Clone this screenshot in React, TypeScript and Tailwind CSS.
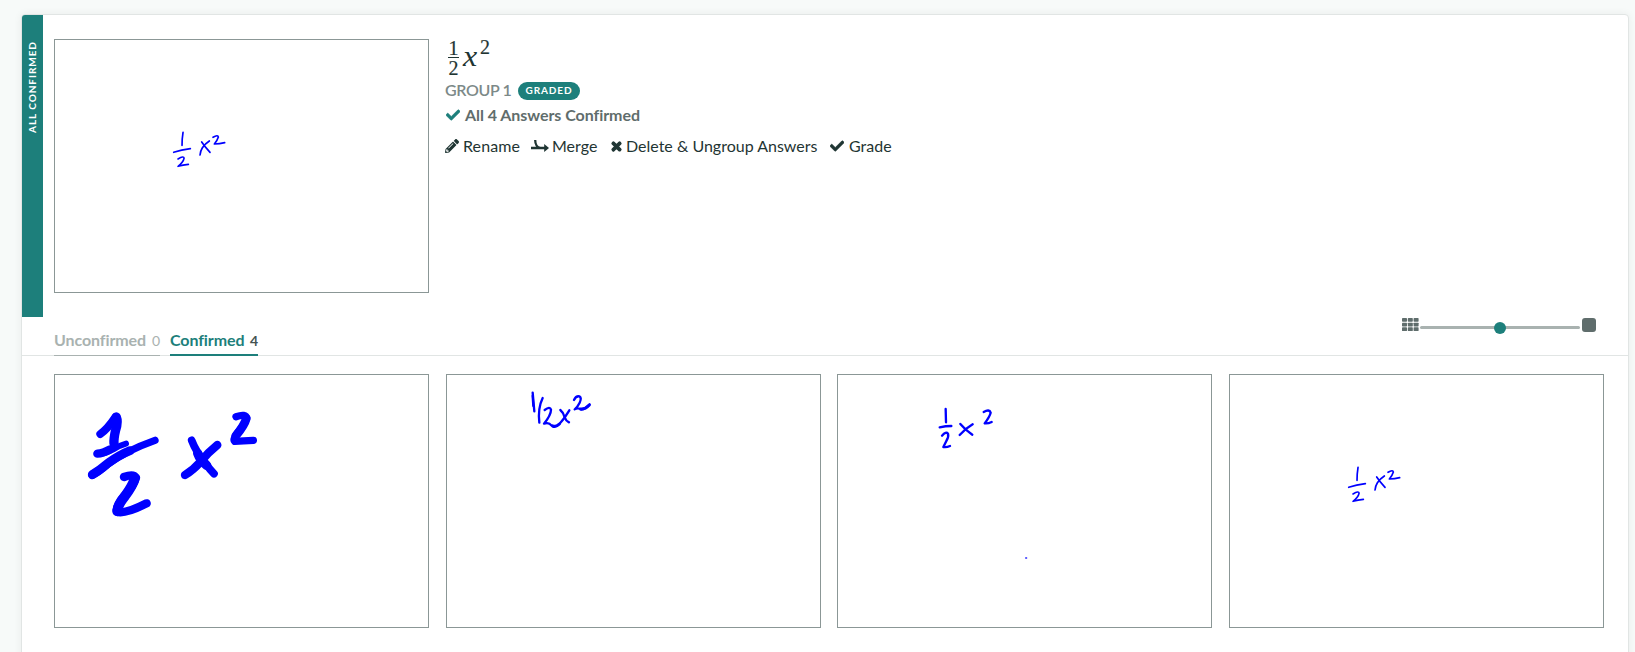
import React from "react";
import { FaCheck, FaPencilAlt, FaTimes } from "react-icons/fa";

function Sketch({ children }: { children?: React.ReactNode }) {
  return (
    <div className="h-[254px] w-[375px] shrink-0 border border-[#8b9796] bg-white">
      <svg viewBox="0 0 373 252" className="block size-full" fill="none" stroke="#0000ff" strokeLinecap="round" strokeLinejoin="round">
        {children}
      </svg>
    </div>
  );
}

function SmallHalf() {
  return (
    <g transform="translate(-55.3 -40) scale(0.33333)" strokeWidth="5">
      <path d="M550 397Q547 415 547 436" />
      <path d="M522 457Q545 449 572 446" />
      <path d="M535 477Q553 466 553 475Q551 486 535 499Q550 494 566 493" />
      <path d="M606 426Q615 440 631 457M629 423Q603 440 601 465" />
      <path d="M640 412Q655 403 656 411Q653 421 644 432Q660 432 675 428" />
    </g>
  );
}

function BoldHalf() {
  return (
    <g transform="translate(15 15) scale(0.33333)" strokeWidth="24">
      <path d="M91 132Q112 118 136 82" />
      <path d="M139 81Q145 95 137 120Q131 145 132 160" strokeWidth="28" />
      <path d="M82 191Q100 194 130 178Q150 166 168 161" strokeWidth="18" />
      <path d="M82 191Q98 190 120 178" strokeWidth="25" />
      <path d="M66 256Q85 248 112 224Q165 183 255 151" strokeWidth="22" />
      <path d="M67 254Q90 240 116 218Q150 194 180 182" strokeWidth="27" />
      <path d="M162 261Q190 250 198 263Q192 285 168 312Q134 352 141 365Q163 374 230 340" strokeWidth="25" />
      <path d="M194 265Q188 288 165 318Q142 346 142 364" strokeWidth="30" />
      <path d="M365 151Q378 185 405 218Q420 239 432 251" strokeWidth="23" />
      <path d="M442 165Q412 189 391 216Q370 240 345 255" strokeWidth="25" />
      <path d="M383 190Q390 210 410 226" strokeWidth="28" />
      <path d="M498 80Q528 70 530 85Q523 105 500 132Q488 149 494 154Q520 153 550 151" strokeWidth="22" />
      <path d="M529 85Q524 105 497 138" strokeWidth="26" />
    </g>
  );
}

function SlashHalf() {
  return (
    <g transform="translate(63 -5) scale(0.33333)" strokeWidth="7">
      <path d="M68 68L73 124" />
      <path d="M68 78L70 108" />
      <path d="M98 84Q83 115 88 158" />
      <path d="M104 120Q120 108 123 119Q123 135 102 161Q117 156 124 166Q136 174 148 162Q164 145 178 121" />
      <path d="M151 120Q160 127 164 142Q168 153 177 157" />
      <path d="M128 168Q138 172 148 162M212 117Q226 118 238 105" strokeWidth="9" />
      <path d="M192 90Q198 77 208 79Q216 84 209 98Q202 112 194 118Q205 112 214 119Q226 118 239 103" />
    </g>
  );
}

function SpacedHalf() {
  return (
    <g transform="translate(82 15) scale(0.33333)" strokeWidth="7">
      <path d="M77 57L78 97" />
      <path d="M59 112Q77 108 94 108" />
      <path d="M66 137Q78 123 84 131Q87 141 79 153L70 171Q79 173 90 168" />
      <path d="M121 102Q135 119 157 134M158 103Q136 116 119 135" />
      <path d="M191 66Q208 56 212 68Q209 80 194 100Q205 101 215 96" />
      <path d="M318 504h1" strokeWidth="5" strokeLinecap="square" opacity="0.75" />
    </g>
  );
}

function MergeIcon() {
  return (
    <svg viewBox="0 0 18 12" className="h-3 w-[18px]" fill="none" stroke="#1f3533" strokeWidth="2.3">
      <path d="M0 8H14M4.2 0C4.2 4 6 7.6 9.5 8" />
      <path d="M13.2 4L18 8L13.2 12Z" fill="#1f3533" stroke="none" />
    </svg>
  );
}

function GridIcon() {
  const cells = [0, 5.8, 11.6];
  return (
    <svg viewBox="0 0 17 13" className="mt-px h-[13px] w-[17px]" fill="#5f6d6c">
      {cells.map((x, c) =>
        cells.map((_, r) => <rect key={`${c}-${r}`} x={x} y={r * 4.65} width="5" height="3.8" rx="0.7" />)
      )}
    </svg>
  );
}

export default function App() {
  return (
    <div className="h-[652px] overflow-hidden bg-[#f7faf9] pl-[21px] pt-[14px] font-['Lato',sans-serif] text-[#1f3533]">
      <main className="h-[660px] w-[1608px] rounded-[4px] border border-[#e1e5e4] bg-white shadow-[0_0_8px_rgba(0,0,0,0.06)]">
        <section className="flex h-[302px]">
          <div className="flex w-[21px] justify-center rounded-tl-[3px] bg-[#1d7f7b] pt-[26px]">
            <span className="h-[92px] rotate-180 whitespace-nowrap text-[10px] font-bold leading-[19px] tracking-[0.95px] text-white [writing-mode:vertical-rl]">ALL CONFIRMED</span>
          </div>
          <div className="ml-[11px] pt-6"><Sketch><SmallHalf /></Sketch></div>
          <div className="ml-4 pt-6">
            <div className="flex h-[42px] font-['Liberation_Serif',serif]">
              <div className="ml-[3px] w-[11px] text-center text-[20px] [-webkit-text-stroke:0.2px_#1f3533]">
                <div className="h-[19px] border-b border-[#1f3533] leading-[18px]">1</div>
                <div className="h-[19px] leading-[20px]">2</div>
              </div>
              <span className="ml-[4px] mt-[2px] inline-block w-[15px] origin-left scale-x-110 text-[29px] italic leading-[30px]">x</span>
              <span className="ml-[2px] text-[20px] leading-[17px] [-webkit-text-stroke:0.2px_#1f3533]">2</span>
            </div>
            <div className="flex h-[19px] items-center">
              <span className="-mt-px w-[73px] whitespace-nowrap text-[16px] font-semibold tracking-[-0.35px] text-[#7c8988]">GROUP 1</span>
              <span className="flex h-[18px] w-[62px] items-center justify-center rounded-full bg-[#1d7f7b] text-[10px] font-bold tracking-[0.9px] text-white">GRADED</span>
            </div>
            <div className="mt-[3px] flex h-[24px] items-center text-[16px] font-bold tracking-[-0.05px] text-[#5f6d6c]">
              <FaCheck className="ml-px mr-[5px] size-[14px] text-[#1d7f7b]" stroke="currentColor" strokeWidth="24" />
              All 4 Answers Confirmed
            </div>
            <div className="mt-[7px] flex h-[24px] items-center whitespace-nowrap text-[16px]">
              <FaPencilAlt className="mr-1 size-[14px]" />
              <span className="w-[68px] tracking-[0.1px]">Rename</span>
              <MergeIcon />
              <span className="ml-[3px] w-[58px]">Merge</span>
              <FaTimes className="mr-[3px] size-[13px]" strokeWidth="50" stroke="currentColor" />
              <span className="w-[204px]">Delete &amp; Ungroup Answers</span>
              <FaCheck className="mr-[5px] size-[14px]" stroke="currentColor" strokeWidth="24" />
              <span>Grade</span>
            </div>
          </div>
        </section>
        <nav className="flex h-[39px] items-end justify-between border-b border-[#e1e5e4] pl-8 pr-[32px]">
          <div className="-mb-px flex gap-[10px] whitespace-nowrap text-[16px] font-bold">
            <div className="flex h-[28px] w-[106px] items-baseline justify-between border-b border-[#a9b2b0] tracking-[-0.1px] text-[#a9b2b0]">
              <span>Unconfirmed</span><span className="text-[14px] font-normal">0</span>
            </div>
            <div className="flex h-[28px] w-[88px] items-baseline justify-between border-b-2 border-[#1d7f7b] tracking-[-0.1px] text-[#1d7f7b]">
              <span>Confirmed</span><span className="text-[14px] font-bold text-[#455352]">4</span>
            </div>
          </div>
          <div className="flex h-[38px]">
            <GridIcon />
            <div className="mx-px mt-[4px] flex h-[12px] w-[161px] items-center">
              <div className="flex h-[3px] w-[160px] items-center justify-center rounded-full bg-[#a9b2b0]">
                <div className="mt-px size-[12px] shrink-0 rounded-full bg-[#1d7f7b]" />
              </div>
            </div>
            <div className="mt-px size-[14px] rounded-[3px] bg-[#5f6d6c]" />
          </div>
        </nav>
        <section className="flex justify-between pl-8 pr-6 pt-[18px]">
          <Sketch><BoldHalf /></Sketch>
          <Sketch><SlashHalf /></Sketch>
          <Sketch><SpacedHalf /></Sketch>
          <Sketch><SmallHalf /></Sketch>
        </section>
      </main>
    </div>
  );
}
